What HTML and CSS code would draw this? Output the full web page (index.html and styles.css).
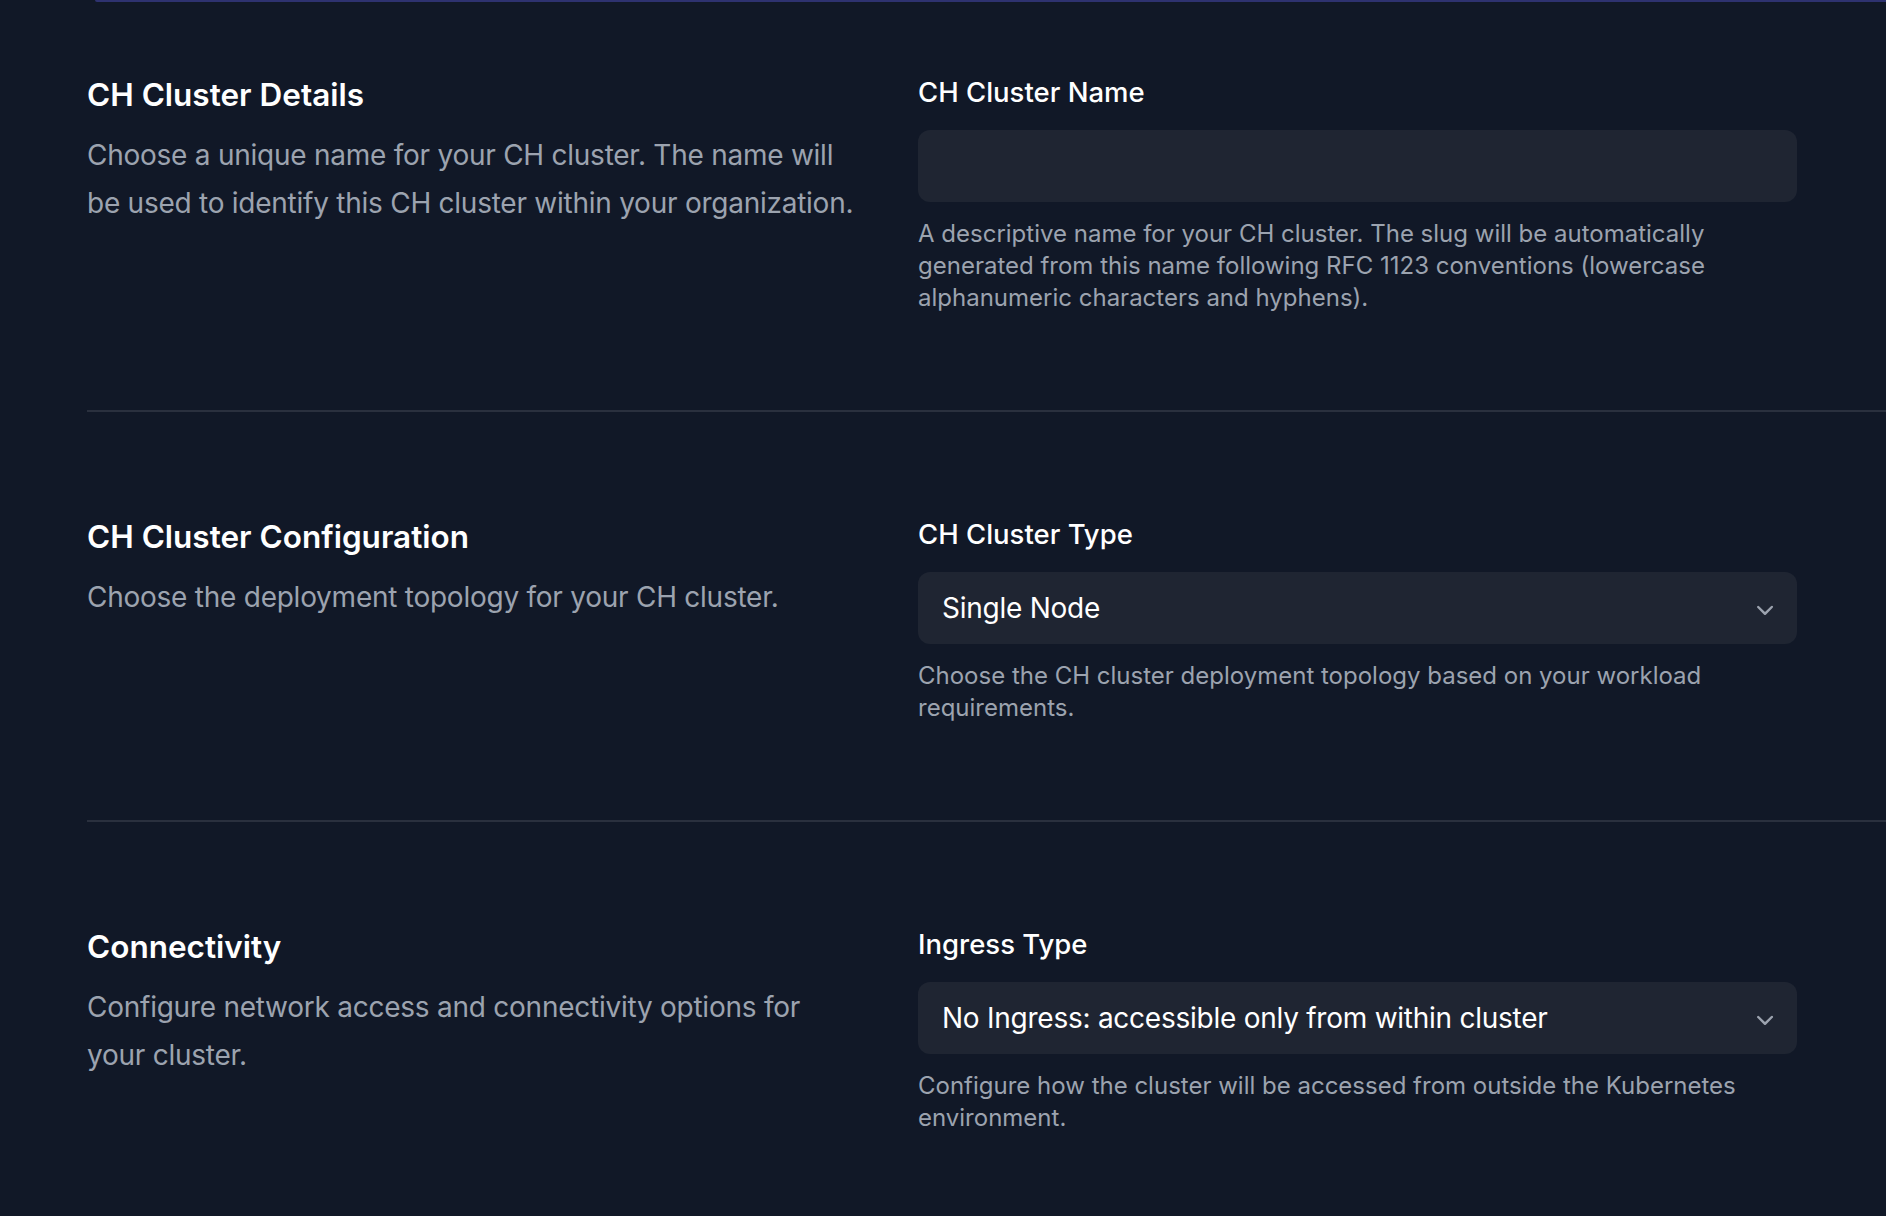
FILE: index.html
```html
<!DOCTYPE html>
<html lang="en">
<head>
<meta charset="utf-8">
<title>CH Cluster</title>
<link rel="stylesheet" href="styles.css">
</head>
<body>
<div class="topbar"></div>
<main class="form">
  <section class="row first">
    <div class="intro">
      <h2 class="title">CH Cluster Details</h2>
      <p class="desc">Choose a unique name for your CH cluster. The name will be used to identify this CH cluster within your organization.</p>
    </div>
    <div class="field">
      <label class="label" for="name">CH Cluster Name</label>
      <input class="control" id="name" type="text">
      <p class="hint">A descriptive name for your CH cluster. The slug will be automatically generated from this name following RFC 1123 conventions (lowercase alphanumeric characters and hyphens).</p>
    </div>
  </section>
  <section class="row">
    <div class="intro">
      <h2 class="title">CH Cluster Configuration</h2>
      <p class="desc">Choose the deployment topology for your CH cluster.</p>
    </div>
    <div class="field">
      <label class="label">CH Cluster Type</label>
      <div class="control select">
        <span class="value">Single Node</span>
        <svg class="chev" viewBox="0 0 20 20" fill="currentColor"><path fill-rule="evenodd" d="M5.22 8.22a.75.75 0 0 1 1.06 0L10 11.94l3.72-3.72a.75.75 0 1 1 1.06 1.06l-4.25 4.25a.75.75 0 0 1-1.060 0L5.22 9.28a.75.75 0 0 1 0-1.06Z"/></svg>
      </div>
      <p class="hint">Choose the CH cluster deployment topology based on your workload requirements.</p>
    </div>
  </section>
  <section class="row">
    <div class="intro">
      <h2 class="title">Connectivity</h2>
      <p class="desc">Configure network access and connectivity options for your cluster.</p>
    </div>
    <div class="field">
      <label class="label">Ingress Type</label>
      <div class="control select">
        <span class="value">No Ingress: accessible only from within cluster</span>
        <svg class="chev" viewBox="0 0 20 20" fill="currentColor"><path fill-rule="evenodd" d="M5.22 8.22a.75.75 0 0 1 1.06 0L10 11.94l3.72-3.72a.75.75 0 1 1 1.06 1.06l-4.25 4.25a.75.75 0 0 1-1.060 0L5.22 9.28a.75.75 0 0 1 0-1.06Z"/></svg>
      </div>
      <p class="hint">Configure how the cluster will be accessed from outside the Kubernetes environment.</p>
    </div>
  </section>
</main>
</body>
</html>
```
FILE: styles.css
```css
* { box-sizing: border-box; }
html, body {
  margin: 0;
  padding: 0;
  background: #111827;
  overflow: hidden;
}
body {
  font-family: Inter, "Noto Sans", "Liberation Sans", sans-serif;
  color: #ffffff;
  -webkit-font-smoothing: antialiased;
}
.topbar {
  height: 2px;
  margin-left: 95px;
  background: #2e3270;
  border-bottom-left-radius: 2px;
}
.form {
  padding-left: 87px;
}
.row {
  display: grid;
  grid-template-columns: 774px 879px;
  column-gap: 57px;
  align-items: start;
  padding: 105px 0 96px;
  border-top: 2px solid #2a303e;
}
.row.first {
  border-top: 0;
  padding-top: 73px;
}
.title {
  margin: 0;
  font-size: 31.5px;
  line-height: 40px;
  font-weight: 600;
  color: #ffffff;
}
.desc {
  margin: 16px 0 0;
  font-size: 28px;
  line-height: 48px;
  letter-spacing: -0.25px;
  color: #9ca3af;
}
.field {
  display: flex;
  flex-direction: column;
}
.label {
  display: block;
  font-size: 27.5px;
  line-height: 34px;
  font-weight: 500;
  color: #ffffff;
  margin-bottom: 21px;
}
.control {
  display: block;
  width: 100%;
  height: 72px;
  margin: 0;
  border: 0;
  outline: 0;
  border-radius: 12px;
  background: #1f2532;
  font: inherit;
  color: #ffffff;
}
.select {
  display: flex;
  align-items: center;
  justify-content: space-between;
  padding: 0 16px 0 24px;
}
.value {
  font-size: 28px;
  line-height: 40px;
  letter-spacing: -0.25px;
  color: #ffffff;
}
.chev {
  width: 32px;
  height: 32px;
  color: #9ca3af;
  margin-top: 1px;
}
.hint {
  margin: 16px 0 0;
  font-size: 24px;
  line-height: 32px;
  color: #9ca3af;
}
```
